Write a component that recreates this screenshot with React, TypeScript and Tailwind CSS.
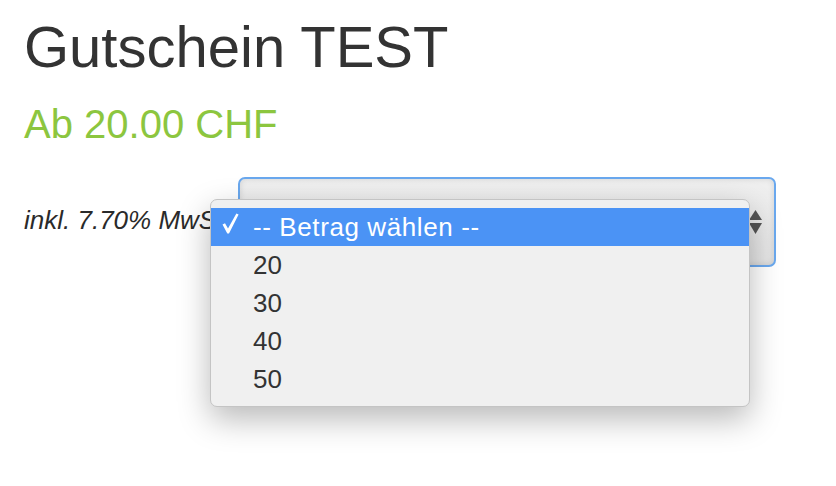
import React from "react";

const options = ["20", "30", "40", "50"];

export default function App() {
  return (
    <div
      className="w-[836px] h-[486px] bg-white px-6 pt-[18px] overflow-hidden"
      style={{ fontFamily: '"Liberation Sans", Arial, sans-serif' }}
    >
      <h1 className="text-[58px] leading-none text-[#333333] font-normal whitespace-nowrap">
        Gutschein TEST
      </h1>
      <div className="mt-[28px] text-[40px] leading-none text-[#8cc63f] whitespace-nowrap">
        Ab 20.00 CHF
      </div>
      <div className="mt-[33px] flex items-center">
        <div className="w-[214px] shrink-0 whitespace-nowrap italic text-[26px] leading-none text-[#2a2a2a] mb-[5px]">
          inkl. 7.70% MwSt.
        </div>
        <div className="relative w-[538px] h-[90px] shrink-0 rounded-[7px] border-2 border-[#6aa8ee] bg-gradient-to-b from-[#f0f0f0] to-[#e4e4e4] shadow-[inset_0_0_6px_rgba(0,0,0,0.12)] flex items-center justify-end pr-[12px]">
          <svg width="13" height="24" viewBox="0 0 13 24" className="block">
            <path d="M6.5 0 L13 10 L0 10 Z" fill="#555555" />
            <path d="M0 13 L13 13 L6.5 24 Z" fill="#555555" />
          </svg>
          <div className="absolute left-[-30px] top-[20px] z-10 w-[540px] rounded-[7px] border border-[#c4c4c4] bg-[#f0f0f0] py-[8px] shadow-[0_12px_32px_rgba(0,0,0,0.28)]">
            <div className="flex items-center h-[38px] bg-[#4b93f5] pl-[11px] text-white">
              <span className="w-[31px] flex items-center mb-[7px]">
                <svg width="17" height="21" viewBox="0 0 17 21" className="block">
                  <path
                    d="M0.5 11.5 L3 10.2 L6 15.6 L14.4 0.4 L16.6 1.5 L7 20.6 L5.3 20.6 Z"
                    fill="#ffffff"
                  />
                </svg>
              </span>
              <span className="text-[26px] leading-none tracking-[0.6px]">-- Betrag wählen --</span>
            </div>
            {options.map((o) => (
              <div key={o} className="flex items-center h-[38px] pl-[42px] text-[26px] leading-none text-[#333333]">
                {o}
              </div>
            ))}
          </div>
        </div>
      </div>
    </div>
  );
}
